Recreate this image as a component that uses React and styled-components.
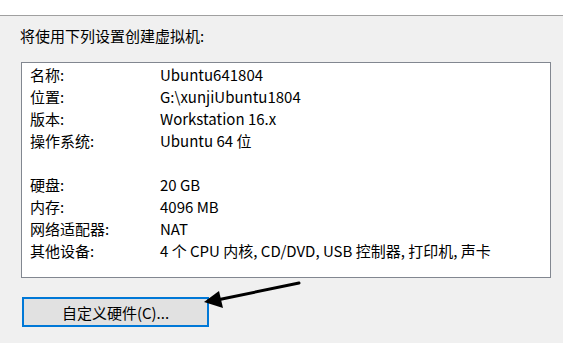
import React from "react";
import styled, { createGlobalStyle } from "styled-components";

const GlobalStyle = createGlobalStyle`
  html, body {
    margin: 0;
    padding: 0;
    background: #f0f0f0;
  }
  body {
    font-family: "Noto Sans CJK SC", "Noto Sans", sans-serif;
    font-size: 15px;
    color: #000;
  }
`;

const rows = [
  ["名称:", "Ubuntu641804"],
  ["位置:", "G:\\xunjiUbuntu1804"],
  ["版本:", "Workstation 16.x"],
  ["操作系统:", "Ubuntu 64 位"],
  null,
  ["硬盘:", "20 GB"],
  ["内存:", "4096 MB"],
  ["网络适配器:", "NAT"],
  ["其他设备:", "4 个 CPU 内核, CD/DVD, USB 控制器, 打印机, 声卡"],
];

const App = () => {
  return (
    <>
      <GlobalStyle />
      <Page>
        <TopStrip />
        <Body>
          <Heading>将使用下列设置创建虚拟机:</Heading>
          <SummaryBox>
            {rows.map((row, i) =>
              row ? (
                <Row key={i}>
                  <Label>{row[0]}</Label>
                  <Value>{row[1]}</Value>
                </Row>
              ) : (
                <Row key={i} />
              )
            )}
          </SummaryBox>
          <ButtonArea>
            <HardwareButton>自定义硬件(C)...</HardwareButton>
            <Arrow width="100" height="30" viewBox="0 0 100 30">
              <line x1="97" y1="2" x2="15" y2="19" stroke="#000" strokeWidth="3" strokeLinecap="round" />
              <polygon points="2,21 17,10 21,27" fill="#000" />
            </Arrow>
          </ButtonArea>
        </Body>
      </Page>
    </>
  );
};

const Page = styled.div`
  width: 563px;
  height: 343px;
  overflow: hidden;
  display: flex;
  flex-direction: column;
`;

const TopStrip = styled.div`
  height: 15px;
  background: #ffffff;
  border-bottom: 1px solid #a0a0a0;
`;

const Body = styled.div`
  flex: 1;
  background: #f0f0f0;
  padding: 9px 0 0 20px;
`;

const Heading = styled.div`
  height: 22px;
  line-height: 22px;
`;

const SummaryBox = styled.div`
  margin: 15px 0 0 1px;
  width: 530px;
  height: 216px;
  box-sizing: border-box;
  background: #fff;
  border: 1px solid #828790;
  padding: 1px 0 0 8px;
`;

const Row = styled.div`
  display: flex;
  height: 22px;
  line-height: 22px;
`;

const Label = styled.span`
  width: 130px;
  flex-shrink: 0;
`;

const Value = styled.span`
  white-space: nowrap;
`;

const ButtonArea = styled.div`
  position: relative;
  margin-top: 19px;
  padding-left: 2px;
`;

const HardwareButton = styled.button`
  width: 187px;
  height: 30px;
  box-sizing: border-box;
  background: #e1e1e1;
  border: 2px solid #0078d7;
  font-family: inherit;
  font-size: 15px;
  color: #000;
  padding: 0;
  cursor: pointer;
`;

const Arrow = styled.svg`
  position: absolute;
  left: 182px;
  top: -16px;
`;

export default App;
